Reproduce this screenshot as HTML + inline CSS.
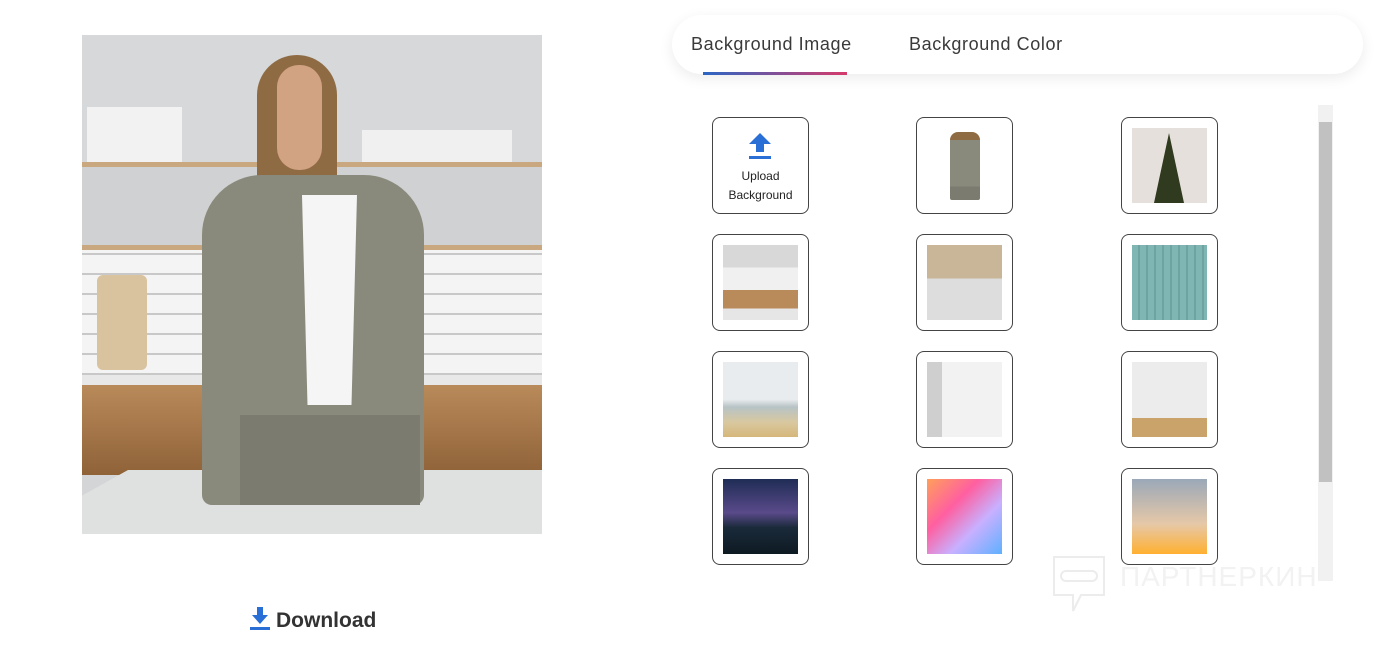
<!DOCTYPE html>
<html><head><meta charset="utf-8"><style>
*{margin:0;padding:0;box-sizing:border-box}
body{width:1374px;height:664px;background:#fff;font-family:"Liberation Sans",sans-serif;position:relative;overflow:hidden}
.photo{position:absolute;left:82px;top:35px;width:460px;height:499px;overflow:hidden;background:#d3d5d6}
.a{position:absolute}
.tabs{position:absolute;left:672px;top:15px;width:691px;height:59px;border-radius:30px;background:#fff;box-shadow:0 4px 14px rgba(0,0,0,.08)}
.tab{position:absolute;top:19px;font-size:18px;color:#3a3a3a;letter-spacing:0.6px}
.cell{position:absolute;width:97px;height:97px;border:1px solid #444;border-radius:8px;background:#fff}
.cell .im{position:absolute;left:10px;top:10px;width:75px;height:75px}
</style></head><body>
<div class="photo">
 <div class="a" style="left:0;top:0;width:460px;height:130px;background:#d6d8d9"></div>
 <div class="a" style="left:0;top:127px;width:460px;height:5px;background:#c9a880"></div>
 <div class="a" style="left:5px;top:72px;width:95px;height:55px;background:#f2f2f2"></div>
 <div class="a" style="left:280px;top:95px;width:150px;height:32px;background:#f0f0f0"></div>
 <div class="a" style="left:0;top:132px;width:460px;height:80px;background:#cfd1d2"></div>
 <div class="a" style="left:0;top:210px;width:460px;height:5px;background:#c9a880"></div>
 <div class="a" style="left:0;top:215px;width:460px;height:125px;background:repeating-linear-gradient(0deg,#c8c8c8 0 2px,#f4f4f4 2px 20px)"></div>
 <div class="a" style="left:15px;top:240px;width:50px;height:95px;background:#d9c39f;border-radius:6px"></div>
 <div class="a" style="left:0;top:340px;width:460px;height:10px;background:#e8e8e8"></div>
 <div class="a" style="left:0;top:350px;width:460px;height:90px;background:linear-gradient(#b98a5a,#8f6238)"></div>
 <div class="a" style="left:0;top:435px;width:460px;height:64px;background:#dfe1e1;clip-path:polygon(10% 0,100% 0,100% 100%,0 100%,0 40%)"></div>
 <div class="a" style="left:175px;top:20px;width:80px;height:140px;background:#8f6b44;border-radius:40px 40px 10px 10px"></div>
 <div class="a" style="left:195px;top:30px;width:45px;height:105px;background:#d2a383;border-radius:22px"></div>
 <div class="a" style="left:120px;top:140px;width:222px;height:330px;background:#8a8a7c;border-radius:60px 60px 10px 10px"></div>
 <div class="a" style="left:220px;top:160px;width:55px;height:210px;background:#f5f5f5;clip-path:polygon(0 0,100% 0,90% 100%,10% 100%)"></div>
 <div class="a" style="left:158px;top:380px;width:180px;height:90px;background:#7c7b70"></div>
</div>
<div class="a" style="left:250px;top:607px;width:20px;height:24px">
<svg width="20" height="24" viewBox="0 0 20 24"><path d="M7 0h6v8h5l-8 9-8-9h5z" fill="#2a6fd6"/><rect x="0" y="20" width="20" height="3" fill="#2a6fd6"/></svg></div>
<div class="a" style="left:276px;top:609px;font-size:21px;font-weight:bold;color:#333">Download</div>
<div class="tabs">
 <div class="tab" style="left:19px">Background Image</div>
 <div class="tab" style="left:237px">Background Color</div>
 <div class="a" style="left:31px;top:57px;width:144px;height:3px;background:linear-gradient(90deg,#2a66c4,#d63a6a)"></div>
</div>
<div class="a" style="left:1318px;top:105px;width:15px;height:476px;background:#f1f1f1"></div>
<div class="a" style="left:1319px;top:122px;width:13px;height:360px;background:#c1c1c1"></div>
<div class="cell" style="left:712px;top:117px">
 <svg class="a" style="left:35px;top:15px" width="24" height="28" viewBox="0 0 24 28"><path d="M12 0l11 11h-7v8H8v-8H1z" fill="#2a6fd6"/><rect x="1" y="23" width="22" height="3" fill="#2a6fd6"/></svg>
 <div class="a" style="left:0;width:95px;top:49px;text-align:center;font-size:12px;line-height:19px;color:#222">Upload<br>Background</div>
</div>
<div class="cell" style="left:916px;top:117px"><div class="a" style="left:33px;top:14px;width:30px;height:68px;background:linear-gradient(#8f6b44 0 12%,#8a8a7c 12% 80%,#7c7b70 80%);border-radius:8px 8px 2px 2px"></div></div>
<div class="cell" style="left:1121px;top:117px"><div class="im" style="background:#e6e0dc"><div class="a" style="left:22px;top:5px;width:30px;height:70px;background:#2f3a1e;clip-path:polygon(50% 0,100% 100%,0 100%)"></div></div></div>
<div class="cell" style="left:712px;top:234px"><div class="im" style="background:linear-gradient(#d8d8d8 0 30%,#f0f0f0 30% 60%,#b98a5a 60% 85%,#e6e6e6 85%)"></div></div>
<div class="cell" style="left:916px;top:234px"><div class="im" style="background:linear-gradient(#c9b597 0 45%,#ddd 45%)"></div></div>
<div class="cell" style="left:1121px;top:234px"><div class="im" style="background:repeating-linear-gradient(90deg,#7fb5b2 0 6px,#6ea3a1 6px 8px)"></div></div>
<div class="cell" style="left:712px;top:351px"><div class="im" style="background:linear-gradient(#e8ecee 0 50%,#b7c3c6 60%,#d8c8a0 80%,#d6b77a)"></div></div>
<div class="cell" style="left:916px;top:351px"><div class="im" style="background:linear-gradient(90deg,#cfcfcf 0 20%,#f2f2f2 20%)"></div></div>
<div class="cell" style="left:1121px;top:351px"><div class="im" style="background:linear-gradient(#ececec 0 75%,#c9a36a 75%)"></div></div>
<div class="cell" style="left:712px;top:468px"><div class="im" style="background:linear-gradient(#1f2d55,#5a4a8a 45%,#1a2a3a 65%,#0e1a22)"></div></div>
<div class="cell" style="left:916px;top:468px"><div class="im" style="background:linear-gradient(135deg,#ff9f5a,#ff5fa0 35%,#c8b0ff 65%,#5fb0ff)"></div></div>
<div class="cell" style="left:1121px;top:468px"><div class="im" style="background:linear-gradient(#9aa8b8,#e6c8a8 60%,#ffb030)"></div></div>
<svg class="a" style="left:1051px;top:554px" width="56" height="60" viewBox="0 0 56 60"><path d="M3 3h50v38H30l-8 16v-16H3z" fill="none" stroke="#ececec" stroke-width="2"/><rect x="10" y="17" width="36" height="10" rx="5" fill="none" stroke="#ececec" stroke-width="2"/></svg>
<div class="a" style="left:1120px;top:561px;font-size:28px;color:#f2f2f2;letter-spacing:1px">ПАРТНЕРКИН</div>
</body></html>
